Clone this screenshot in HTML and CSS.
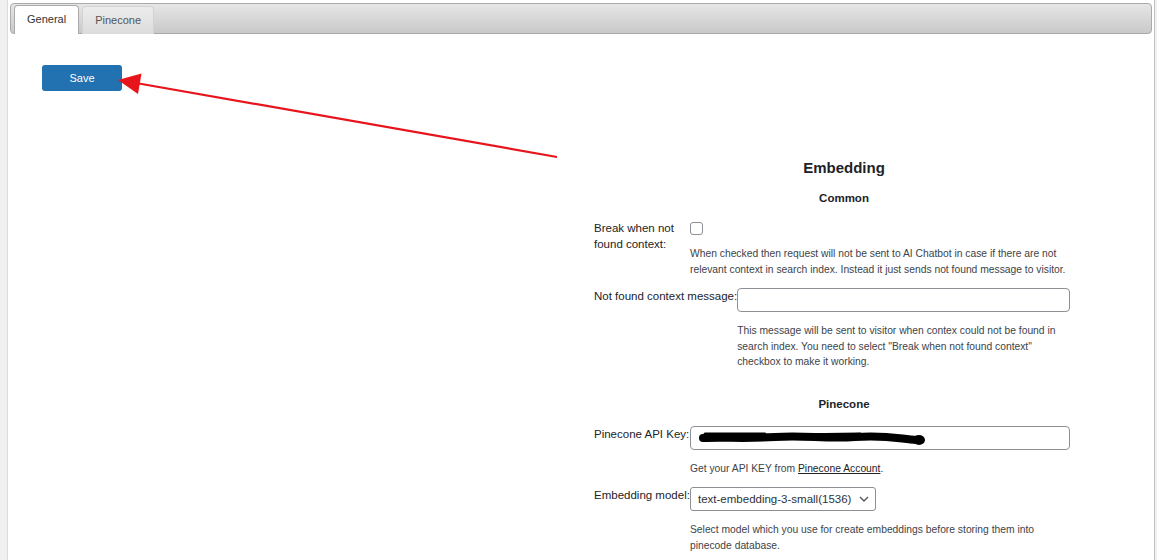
FILE: index.html
```html
<!DOCTYPE html>
<html lang="en">
<head>
  <meta charset="UTF-8" />
  <title>Settings</title>
  <link rel="stylesheet" href="styles.css">
</head>
<body>
  <div class="wrap">
    <ul class="tab-nav">
      <li class="tab active">General</li>
      <li class="tab">Pinecone</li>
    </ul>

    <div class="panel">
      <button class="btn-save">Save</button>

      <div class="settings">
        <h2>Embedding</h2>
        <h3>Common</h3>

        <div class="row">
          <label class="label narrow">Break when not found context:</label>
          <div class="field wide">
            <input type="checkbox" class="check">
            <p class="desc">When checked then request will not be sent to AI Chatbot in case if there are not relevant context in search index. Instead it just sends not found message to visitor.</p>
          </div>
        </div>

        <div class="row">
          <label class="label">Not found context message:</label>
          <div class="field grow">
            <input type="text" class="text-input">
            <p class="desc">This message will be sent to visitor when contex could not be found in search index. You need to select "Break when not found context" checkbox to make it working.</p>
          </div>
        </div>

        <h3 class="section">Pinecone</h3>

        <div class="row">
          <label class="label">Pinecone API Key:</label>
          <div class="field">
            <div class="masked">
              <input type="text" class="text-input">
              <svg class="redact" width="240" height="20" viewBox="0 0 240 20">
                <path d="M8 9 C30 8 50 10 80 8 S130 10 160 8 S200 9 222 11" stroke="#000" stroke-width="8" fill="none" stroke-linecap="round"/>
                <path d="M10 5 L70 5 M95 6 L165 5" stroke="#000" stroke-width="3" fill="none" stroke-linecap="round"/>
                <ellipse cx="224" cy="11" rx="6" ry="5" fill="#000"/>
              </svg>
            </div>
            <p class="desc">Get your API KEY from <a href="#">Pinecone Account</a>.</p>
          </div>
        </div>

        <div class="row">
          <label class="label">Embedding model:</label>
          <div class="field">
            <div class="select">
              <span>text-embedding-3-small(1536)</span>
              <svg width="10" height="6" viewBox="0 0 10 6"><path d="M1 1 L5 5 L9 1" stroke="#50575e" stroke-width="1.4" fill="none"/></svg>
            </div>
            <p class="desc">Select model which you use for create embeddings before storing them into pinecode database.</p>
          </div>
        </div>
      </div>
    </div>
  </div>

  <svg class="arrow" width="1157" height="560" viewBox="0 0 1157 560">
    <line x1="557" y1="157" x2="136" y2="83" stroke="#e8141b" stroke-width="2.2"/>
    <polygon points="118,80 141.5,73.5 138,94" fill="#e8141b"/>
  </svg>
</body>
</html>
```

FILE: styles.css
```css
body {
  margin: 0;
  background: #f0f0f1;
  font-family: "Liberation Sans", Arial, sans-serif;
  color: #3c434a;
}

.wrap {
  margin-left: 7px;
  width: 1148px;
  height: 560px;
  background: #fff;
  border-left: 1px solid #dcdcde;
  border-right: 1px solid #c3c4c7;
  padding: 3px 2px 0 2px;
  box-sizing: border-box;
}

.tab-nav {
  list-style: none;
  margin: 0;
  padding: 2px 3px 0 3px;
  height: 31px;
  box-sizing: border-box;
  display: flex;
  gap: 3px;
  align-items: flex-end;
  border: 1px solid #aaa;
  border-radius: 4px;
  background: linear-gradient(#e6e6e6, #c9c9c9);
}

.tab {
  height: 27px;
  line-height: 27px;
  padding: 0 12px;
  margin-bottom: -1px;
  font-size: 11px;
  color: #555;
  border: 1px solid #d3d3d3;
  border-bottom: none;
  border-radius: 4px 4px 0 0;
  background: linear-gradient(#ececec, #dcdcdc);
}

.tab.active {
  background: #fff;
  color: #333;
  border-color: #aaa;
  height: 28px;
}

.panel {
  padding: 31px 0 0 32px;
}

.btn-save {
  display: block;
  width: 80px;
  height: 26px;
  border: none;
  border-radius: 3px;
  background: #2271b1;
  color: #fff;
  font-family: inherit;
  font-size: 11px;
}

.settings {
  margin: 69px 0 0 552px;
  width: 500px;
  font-size: 11.5px;
  line-height: 16px;
}

.settings h2 {
  margin: 0;
  text-align: center;
  font-size: 15px;
  line-height: 16px;
  color: #1d2327;
}

.settings h3 {
  margin: 14px 0 15px 0;
  text-align: center;
  font-size: 11.5px;
  line-height: 16px;
  color: #1d2327;
}

.settings h3.section {
  margin: 26px 0 14px 0;
}

.row {
  display: flex;
  align-items: flex-start;
  margin-bottom: 11px;
}

.label {
  min-width: 96px;
  white-space: nowrap;
  color: #1d2327;
}

.label.narrow {
  width: 96px;
  white-space: normal;
  margin-top: -1px;
}

.field {
  width: 380px;
}

.field.wide {
  width: 390px;
}

.field.grow {
  width: 333px;
}

.check {
  display: block;
  width: 13px;
  height: 13px;
  margin: 1px 0 0 0;
  border: 1px solid #8c8f94;
  border-radius: 3px;
  appearance: none;
  background: #fff;
}

.text-input {
  display: block;
  width: 100%;
  height: 24px;
  box-sizing: border-box;
  margin: 0;
  border: 1px solid #8c8f94;
  border-radius: 4px;
  background: #fff;
}

.masked {
  position: relative;
}

.redact {
  position: absolute;
  left: 5px;
  top: 3px;
}

.select {
  display: inline-flex;
  align-items: center;
  gap: 8px;
  height: 24px;
  box-sizing: border-box;
  padding: 0 6px 0 7px;
  border: 1px solid #8c8f94;
  border-radius: 3px;
  font-size: 11.5px;
  color: #2c3338;
}

.desc {
  margin: 11px 0 0 0;
  font-size: 10.3px;
  line-height: 15.5px;
  color: #3c434a;
}

.desc a {
  color: #1d2327;
}

.arrow {
  position: absolute;
  top: 0;
  left: 0;
  pointer-events: none;
}
```
